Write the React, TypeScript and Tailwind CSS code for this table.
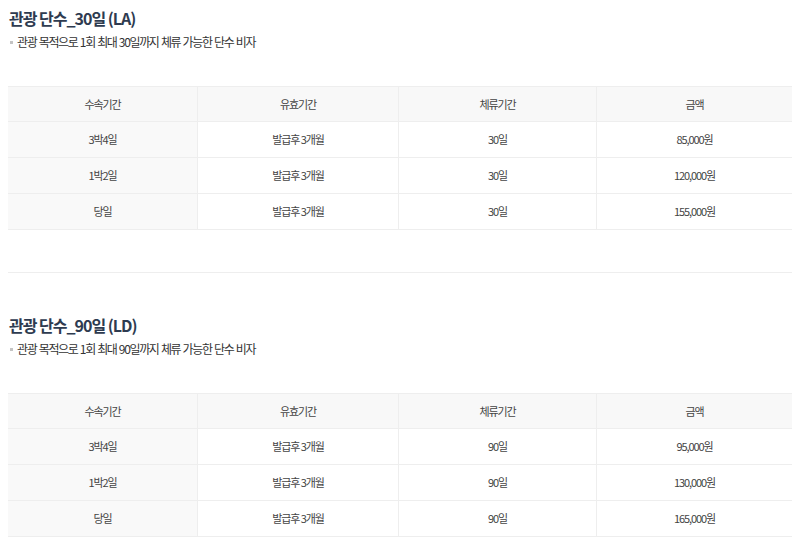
import React from "react";

type Row = { period: string; valid: string; stay: string; price: string };

const sections: { title: string; desc: string; rows: Row[] }[] = [
  {
    title: "관광 단수_30일 (LA)",
    desc: "관광 목적으로 1회 최대 30일까지 체류 가능한 단수 비자",
    rows: [
      { period: "3박4일", valid: "발급후 3개월", stay: "30일", price: "85,000원" },
      { period: "1박2일", valid: "발급후 3개월", stay: "30일", price: "120,000원" },
      { period: "당일", valid: "발급후 3개월", stay: "30일", price: "155,000원" },
    ],
  },
  {
    title: "관광 단수_90일 (LD)",
    desc: "관광 목적으로 1회 최대 90일까지 체류 가능한 단수 비자",
    rows: [
      { period: "3박4일", valid: "발급후 3개월", stay: "90일", price: "95,000원" },
      { period: "1박2일", valid: "발급후 3개월", stay: "90일", price: "130,000원" },
      { period: "당일", valid: "발급후 3개월", stay: "90일", price: "165,000원" },
    ],
  },
];

const headers = ["수속기간", "유효기간", "체류기간", "금액"];
const cols = "grid grid-cols-[189px_201px_198px_1fr]";
const cell =
  "flex items-center justify-center border-l border-[#eeeeee] first:border-l-0 text-[11px] tracking-[-1.1px] text-[#444444]";

function PriceTable({ rows }: { rows: Row[] }) {
  return (
    <div className="mt-[35px] w-full">
      <div className={`${cols} h-[36px] border-y border-[#eeeeee] bg-[#f8f8f8]`}>
        {headers.map((h) => (
          <div key={h} className={cell}>
            {h}
          </div>
        ))}
      </div>
      {rows.map((r, i) => (
        <div key={i} className={`${cols} h-[36px] border-b border-[#eeeeee]`}>
          <div className={`${cell} bg-[#f9f9f9]`}>{r.period}</div>
          <div className={cell}>{r.valid}</div>
          <div className={cell}>{r.stay}</div>
          <div className={cell}>{r.price}</div>
        </div>
      ))}
    </div>
  );
}

export default function App() {
  return (
    <div
      className="w-[800px] h-[540px] overflow-hidden bg-white px-2 pt-[6px]"
      style={{ fontFamily: '"Noto Sans CJK KR", "Noto Sans", sans-serif' }}
    >
      {sections.map((s, i) => (
        <section key={s.title} className={i > 0 ? "mt-[40px]" : ""}>
          <h3 className="pl-[1px] text-[16px] leading-[24px] font-bold tracking-[-1px] text-[#2e3b50]">
            {s.title}
          </h3>
          <p className="mt-[3px] flex items-center gap-[4px] pl-[2px] text-[12px] leading-[18px] tracking-[-1.35px] [word-spacing:1px] text-[#333333]">
            <span className="inline-block h-[3px] w-[3px] bg-[#c4c4c4]" />
            <span>{s.desc}</span>
          </p>
          <PriceTable rows={s.rows} />
          {i === 0 && <div className="mt-[42px] h-px bg-[#eeeeee]" />}
        </section>
      ))}
    </div>
  );
}
